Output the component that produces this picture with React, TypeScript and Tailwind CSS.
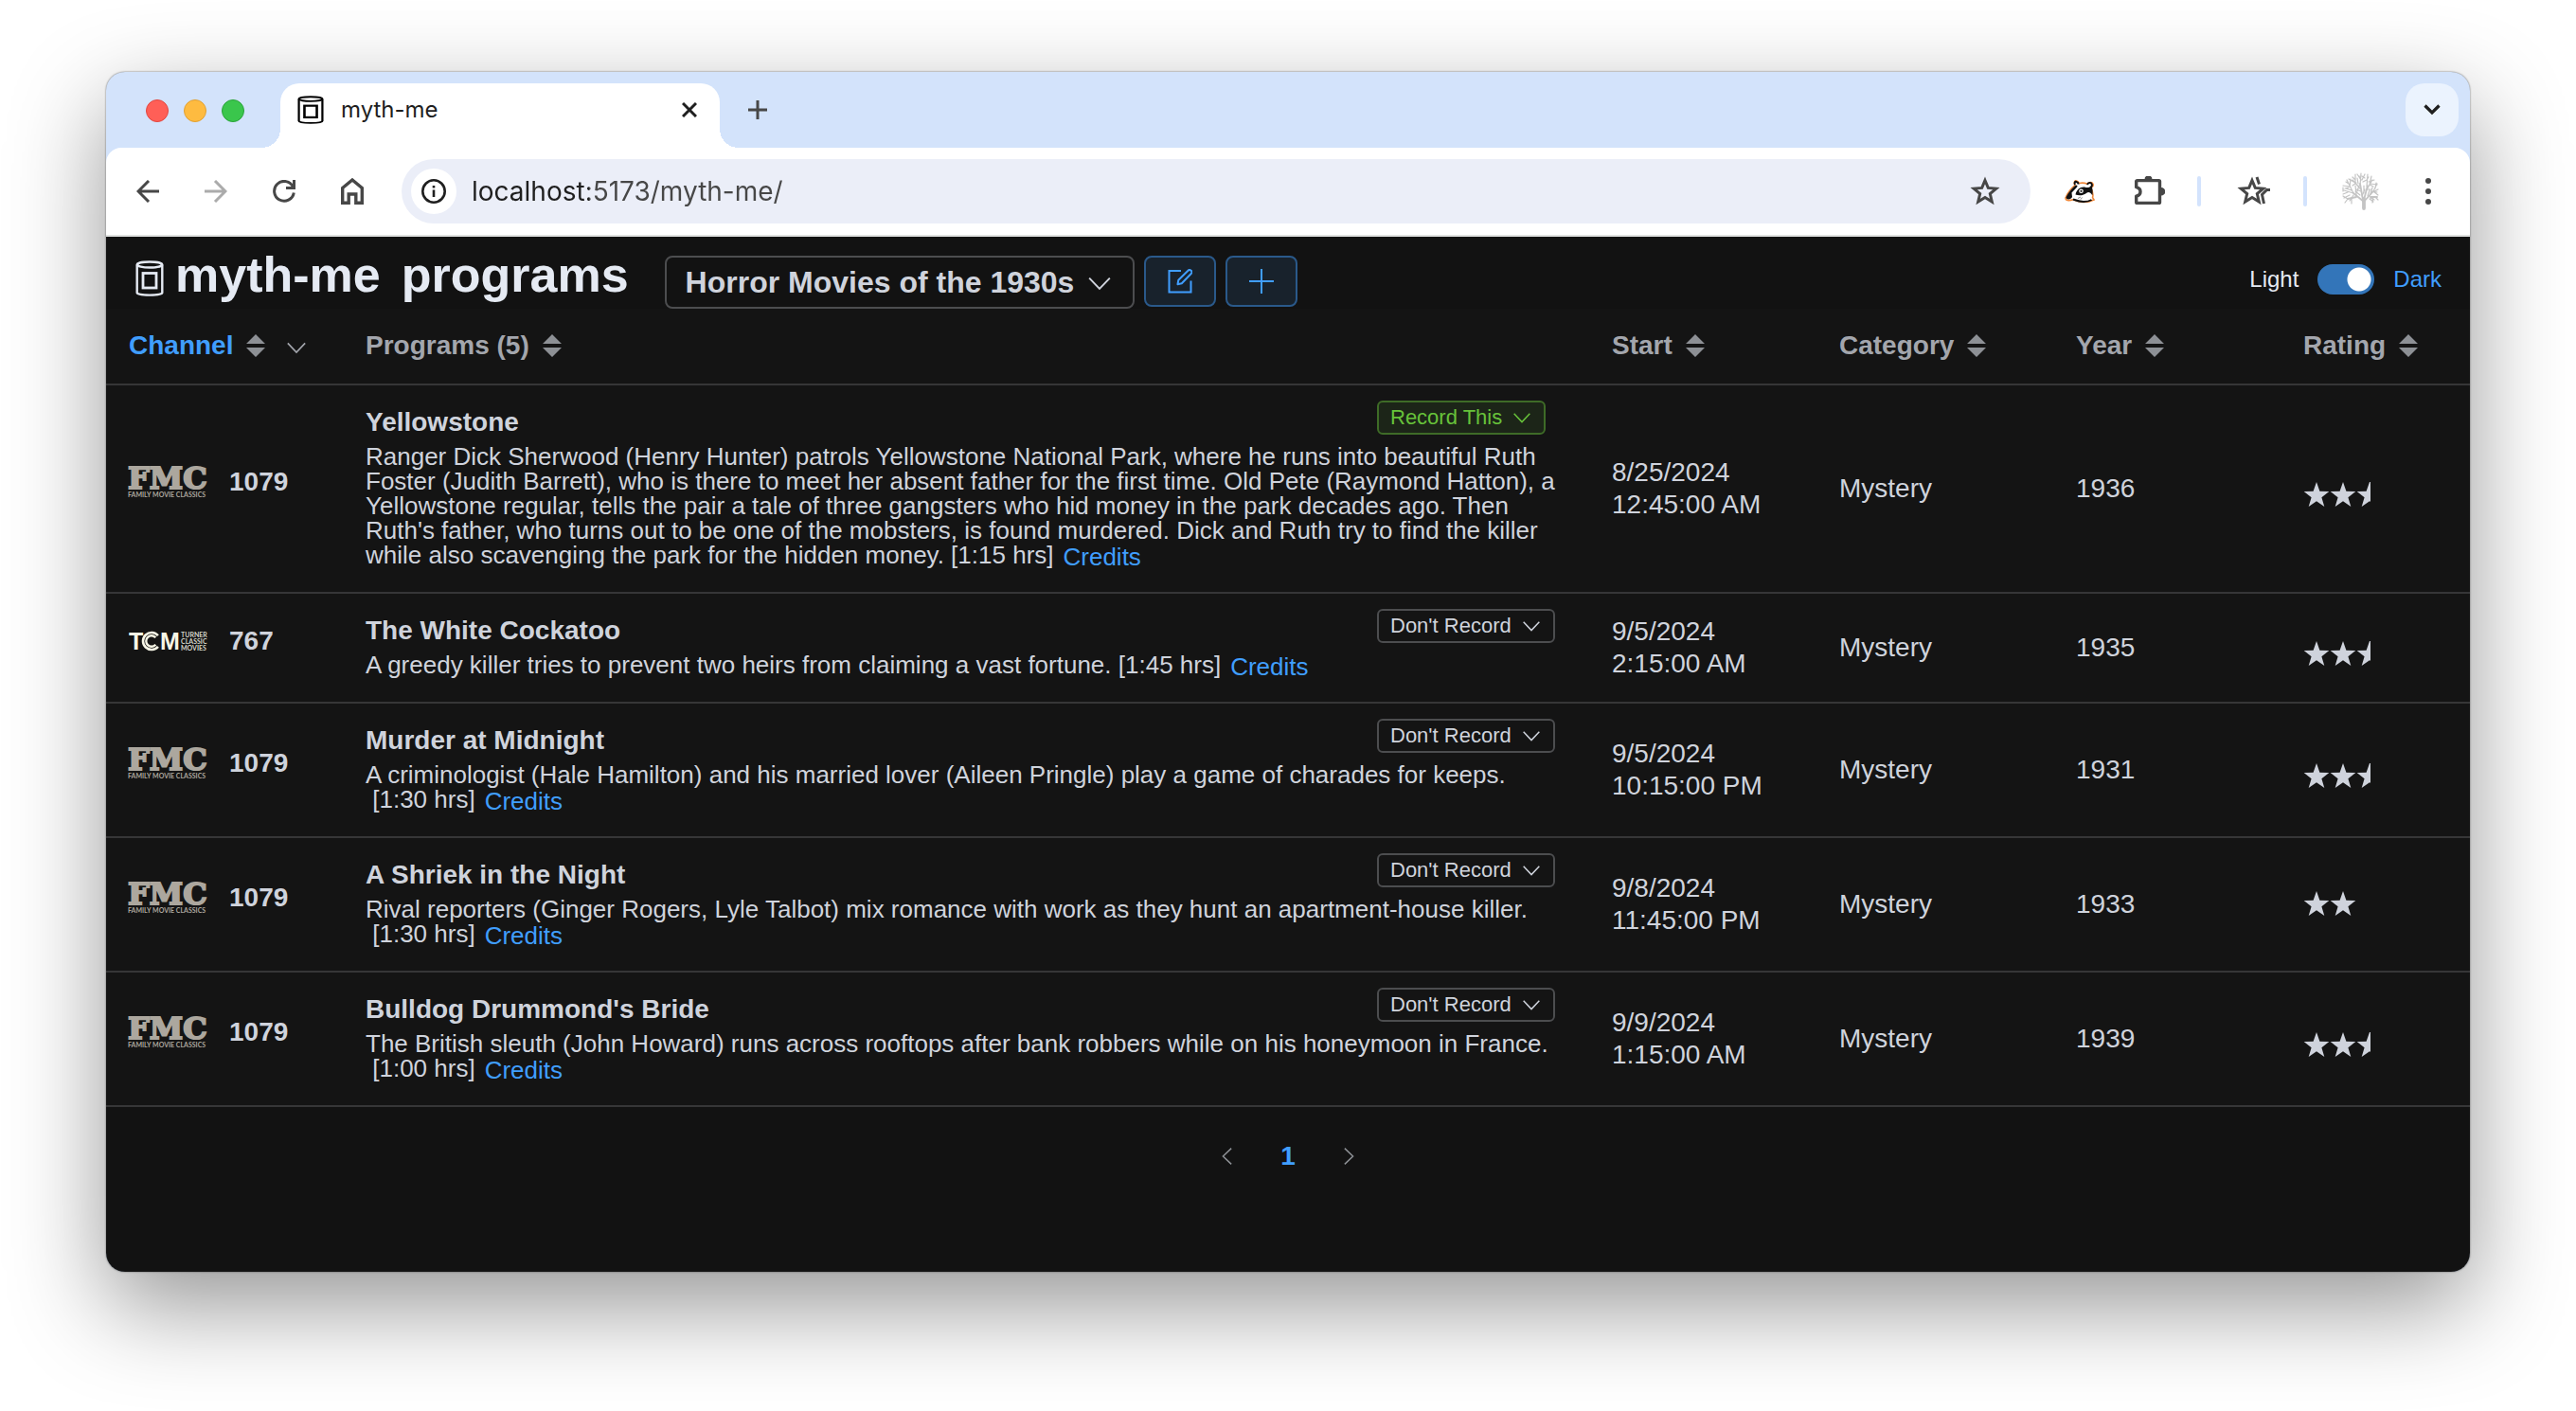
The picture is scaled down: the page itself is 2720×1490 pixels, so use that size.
import React from "react";

type Program = {
  logo: "fmc" | "tcm";
  channel: string;
  title: string;
  description: string;
  duration: string;
  date: string;
  time: string;
  year: string;
  stars: number;
  record: boolean;
};

const programs: Program[] = [
  {
    logo: "fmc",
    channel: "1079",
    title: "Yellowstone",
    description:
      "Ranger Dick Sherwood (Henry Hunter) patrols Yellowstone National Park, where he runs into beautiful Ruth Foster (Judith Barrett), who is there to meet her absent father for the first time. Old Pete (Raymond Hatton), a Yellowstone regular, tells the pair a tale of three gangsters who hid money in the park decades ago. Then Ruth's father, who turns out to be one of the mobsters, is found murdered. Dick and Ruth try to find the killer while also scavenging the park for the hidden money.",
    duration: "1:15",
    date: "8/25/2024",
    time: "12:45:00 AM",
    year: "1936",
    stars: 2.5,
    record: true,
  },
  {
    logo: "tcm",
    channel: "767",
    title: "The White Cockatoo",
    description: "A greedy killer tries to prevent two heirs from claiming a vast fortune.",
    duration: "1:45",
    date: "9/5/2024",
    time: "2:15:00 AM",
    year: "1935",
    stars: 2.5,
    record: false,
  },
  {
    logo: "fmc",
    channel: "1079",
    title: "Murder at Midnight",
    description:
      "A criminologist (Hale Hamilton) and his married lover (Aileen Pringle) play a game of charades for keeps.",
    duration: "1:30",
    date: "9/5/2024",
    time: "10:15:00 PM",
    year: "1931",
    stars: 2.5,
    record: false,
  },
  {
    logo: "fmc",
    channel: "1079",
    title: "A Shriek in the Night",
    description:
      "Rival reporters (Ginger Rogers, Lyle Talbot) mix romance with work as they hunt an apartment-house killer.",
    duration: "1:30",
    date: "9/8/2024",
    time: "11:45:00 PM",
    year: "1933",
    stars: 2,
    record: false,
  },
  {
    logo: "fmc",
    channel: "1079",
    title: "Bulldog Drummond's Bride",
    description:
      "The British sleuth (John Howard) runs across rooftops after bank robbers while on his honeymoon in France.",
    duration: "1:00",
    date: "9/9/2024",
    time: "1:15:00 AM",
    year: "1939",
    stars: 2.5,
    record: false,
  },
];

function CanIcon({ className }: { className: string }) {
  return (
    <svg
      viewBox="0 0 30 38"
      preserveAspectRatio="none"
      className={className}
      fill="none"
      stroke="currentColor"
      aria-hidden="true"
    >
      <ellipse cx="15" cy="4.5" rx="13.2" ry="3" strokeWidth="2.4" />
      <path d="M1.700 4.500V34c0 1.600 5 2.600 13.300 2.600S28.300 35.600 28.300 34V4.500" strokeWidth="2.400" />
      <rect x="8" y="13.500" width="14" height="15.500" strokeWidth="2.800" />
    </svg>
  );
}

function ChevronDown({ className }: { className: string }) {
  return (
    <svg viewBox="0 0 24 24" className={className} fill="none" stroke="currentColor" strokeWidth="1.800" aria-hidden="true">
      <path d="M2 7l10 10.500L22 7" />
    </svg>
  );
}

function Toolbar() {
  const button = "flex size-12 items-center justify-center text-[#474747]";
  return (
    <div className="flex h-[92px] items-center rounded-t-[16px] bg-white pr-5 pl-5">
      <div className="flex gap-6">
        <button className={button} aria-label="Back">
          <svg viewBox="0 0 24 24" className="size-6" fill="none" stroke="currentColor" strokeWidth="3">
            <path d="M24 12H2.500M13 1L2 12l11 11" />
          </svg>
        </button>
        <button className="flex size-12 items-center justify-center text-[#ababab]" aria-label="Forward">
          <svg viewBox="0 0 24 24" className="size-6" fill="none" stroke="currentColor" strokeWidth="3">
            <path d="M0 12h21.500M11 1l11 11-11 11" />
          </svg>
        </button>
        <button className={button} aria-label="Reload">
          <svg viewBox="0 0 24 24" className="size-6" fill="none" stroke="currentColor" strokeWidth="3">
            <path d="M22.300 13.500A10.400 10.400 0 1 1 21.500 7.500" />
            <path d="M22.500 0v8.500H14" />
          </svg>
        </button>
        <button className={button} aria-label="Home">
          <svg viewBox="0 0 24 28" className="h-7 w-6" fill="none" stroke="currentColor" strokeWidth="3.400">
            <path d="M1.700 26.300V10.500L12 2l10.300 8.500v15.800h-6.500V17H8.200v9.300z" />
          </svg>
        </button>
      </div>
      <div className="ml-7 flex h-[68px] flex-1 items-center rounded-full bg-[#ebeef8] pr-6 pl-[10px]">
        <button className="flex size-12 items-center justify-center rounded-full bg-white text-[#1f1f1f]" aria-label="Site information">
          <svg viewBox="0 0 26 26" className="size-[26px]" fill="none" stroke="currentColor">
            <circle cx="13" cy="13" r="11.700" strokeWidth="2.600" />
            <path d="M13 11.500V19M13 7v2.500" strokeWidth="2.600" />
          </svg>
        </button>
        <input
          type="text"
          aria-label="Address"
          defaultValue="localhost:5173/myth-me/"
          className="ml-4 h-12 flex-1 bg-[linear-gradient(90deg,#1f1f1f_124px,#474747_124px)] bg-clip-text font-['Inter',sans-serif] text-[28px] text-transparent outline-none"
        />
        <button className={button} aria-label="Bookmark this tab">
          <svg viewBox="0 0 32 32" className="size-8" fill="none" stroke="currentColor" strokeWidth="3">
            <path d="M16 4.500l3.300 7.900 8.500.7-6.500 5.500 2 8.400-7.300-4.500-7.300 4.500 2-8.400-6.500-5.500 8.500-.7z" />
          </svg>
        </button>
      </div>
      <button className="ml-7 flex size-12 items-center justify-center" aria-label="Privacy Badger">
        <svg viewBox="0 0 32 26" className="h-[26px] w-8">
          <path
            d="M1 20C3 15 8 9 11 6.500 9.500 3.500 10.500 1.500 12.500 2s2.500 1.500 3 2.500c3-.7 6-.3 8.500.7 1.500-2.200 5-2.500 6 0 .8 2-.8 3.600-2.300 4C30 14 30.500 17 29.500 19.500L31 22c-3 1.500-7 2.500-11 2.500S12 23 9 21.800C6 22.800 1 23.500 1 20z"
            fill="#fff"
            stroke="#f0883a"
            strokeWidth="1.600"
          />
          <path
            d="M1.500 19.500C4 14 8.500 9 12 6.500c2 .2 2 1.500.5 2.800L7.500 14.500 8 19c-1 2.700-6 3.500-6.500.5zM11.500 16.500C13 10.500 17.500 7.500 22.500 9c2.500.5 5-.8 5.800-2.300 1.400 3.500 1.700 7 1 10.500-2-3-4-4-6-2.500-2.600 2.200-7.200 3.500-11.800 1.800z"
            fill="#111"
          />
          <path
            d="M11 6C10 4 11 2.500 12.500 3s2 2 2 2.500M24 6c1-2.500 4-2.500 4.800-.5.6 1.800-.6 3-1.800 3.200M9 21.500C13 23 17 24 20 24s6-.5 8.500-2"
            fill="none"
            stroke="#111"
            strokeWidth="2"
          />
          <circle cx="17.500" cy="12.800" r="2.300" fill="#fff" />
          <circle cx="17.500" cy="12.800" r="1.100" fill="#111" />
          <path d="M14 20.500l3-1.500M17 21.500l1.500-2" stroke="#888" strokeWidth="1" />
        </svg>
      </button>
      <button className="ml-[26px] flex size-12 items-center justify-center text-[#474747]" aria-label="Extensions">
        <svg viewBox="0 0 32 32" className="size-8">
          <path
            d="M3.600 4.600H25.500a1 1 0 0 1 1 1V27.400a1 1 0 0 1-1 1H2.700a1 1 0 0 1-1-1V21.200c2.600-.6 4.300-2.300 4.300-4.700S4.300 12.300 1.700 11.700V5.600a1 1 0 0 1 1-1z"
            fill="none"
            stroke="currentColor"
            strokeWidth="3.400"
            strokeLinejoin="round"
          />
          <path d="M10.500 3.500a4 4 0 0 1 8 0zM28 12a4.300 4.300 0 0 1 0 8.600z" fill="currentColor" />
        </svg>
      </button>
      <span className="ml-[26px] h-8 w-1 rounded-full bg-[#d3e3fd]" />
      <button className="ml-8 flex size-12 items-center justify-center text-[#474747]" aria-label="Labs">
        <svg viewBox="0 0 36 32" className="h-8 w-9">
          <path
            d="M16 4.500l3.300 7.900 8.500.7-6.500 5.500 2 8.400-7.300-4.500-7.300 4.500 2-8.400-6.500-5.500 8.500-.7z"
            fill="none"
            stroke="currentColor"
            strokeWidth="3"
          />
          <path d="M21 1l2.500 7.500M35 14.500h-3.500L26.500 19.500l2 9.500" fill="none" stroke="currentColor" strokeWidth="3" />
        </svg>
      </button>
      <span className="ml-7 h-8 w-1 rounded-full bg-[#d3e3fd]" />
      <button className="ml-8 flex size-12 items-center justify-center" aria-label="Profile">
        <svg viewBox="0 0 40 40" className="size-10" fill="none" stroke="#c4c4c4" strokeLinecap="round">
          <path d="M24 38V28" strokeWidth="3.800" />
          <path d="M24 31L13 22M24 31l9-10M23 29l-3-17M24 29l4-15M16 26l-9 2M31 26l7 0" strokeWidth="1.800" />
          <path
            d="M13 22L3 19M13 22L8 12M20 17L12 8M20 14L21 1M26 20L33 8M27 15L28 2M33 21l6-3M16 24L15 14M9 15L2 14M9 15l1-8M15 11l0-9M15 11l-7-4M21 8l-4-6M22 8l3-6M30 13l2-9M31 12l7 1M34 20l4-8M34 20l5 4M7 28l-5-3M7 28l-3 4M11 27l0 6M7 21l-5 2M36 26l3 3M34 26l-1 6M21 20l-5-2M27 18l4 0M20 24l-5-4M28 25l2-6M24 22l0-8M11 19l-6-2M23 10l4-2M29 10l6-2M12 14l4-3M18 12l-1-6M34 15l-4-2M36 17l1-6M13 24l-4 6M30 28l4 3M5 10l3 2M17 20l2-6M22 25l3-7M4 17l4-1M31 23l2-7M25 6l-3-2M12 5l3 3M2 20l0-4M6 8l2 4M38 21l-5-1M19 4l2 4M29 5l-2 3M9 24l-6 3M35 29l-4-2"
            strokeWidth="1.200"
          />
        </svg>
      </button>
      <button className="ml-6 flex size-12 items-center justify-center text-[#474747]" aria-label="Menu">
        <svg viewBox="0 0 8 28" className="h-7 w-2" fill="currentColor">
          <circle cx="4" cy="3" r="3" />
          <circle cx="4" cy="14" r="3" />
          <circle cx="4" cy="25" r="3" />
        </svg>
      </button>
    </div>
  );
}

function TabStrip() {
  return (
    <div className="flex h-20 pt-3 pr-3 pl-[42px]">
      <div className="flex h-[58px] w-[142px] items-center gap-4">
        <span className="size-6 rounded-full border border-[#e2463f] bg-[#ff5f57]" />
        <span className="size-6 rounded-full border border-[#e1a032] bg-[#febb40]" />
        <span className="size-6 rounded-full border border-[#2ba33a] bg-[#3ac64c]" />
      </div>
      <div className="relative flex w-[464px] items-center rounded-t-[20px] bg-white pr-5 pb-3 pl-[18px]">
        <span className="absolute bottom-0 -left-5 size-5 bg-[radial-gradient(circle_at_top_left,transparent_20px,white_20px)]" />
        <span className="absolute -right-5 bottom-0 size-5 bg-[radial-gradient(circle_at_top_right,transparent_20px,white_20px)]" />
        <CanIcon className="h-[30px] w-7 text-black" />
        <span className="ml-[18px] flex-1 font-['Inter',sans-serif] text-[24px] leading-8 text-[#1f1f1f]">myth-me</span>
        <button className="flex size-6 items-center justify-center text-[#1f1f1f]" aria-label="Close tab">
          <svg viewBox="0 0 16 16" className="size-4" fill="none" stroke="currentColor" strokeWidth="3">
            <path d="M1 1l14 14M15 1L1 15" />
          </svg>
        </button>
      </div>
      <button className="ml-6 flex h-14 w-8 items-center justify-center text-[#474747]" aria-label="New tab">
        <svg viewBox="0 0 20 20" className="size-5" fill="none" stroke="currentColor" strokeWidth="3">
          <path d="M10 0v20M0 10h20" />
        </svg>
      </button>
      <button
        className="ml-auto flex size-14 items-center justify-center rounded-[20px] bg-[#ebf3fe] text-[#1f1f1f]"
        aria-label="Search tabs"
      >
        <svg viewBox="0 0 18 12" className="h-3 w-[18px]" fill="none" stroke="currentColor" strokeWidth="3.200">
          <path d="M1.500 1.500L9 9l7.500-7.500" />
        </svg>
      </button>
    </div>
  );
}

function SortCaret() {
  return (
    <svg viewBox="0 0 20 24" className="h-6 w-5 text-[#8d9095]" fill="currentColor" aria-hidden="true">
      <path d="M10 0l10 10H0zM10 24L0 14h20z" />
    </svg>
  );
}

function FmcLogo() {
  return (
    <svg viewBox="0 0 88 34" className="h-[34px] w-[88px] overflow-visible" role="img" aria-label="FMC Family Movie Classics">
      <text
        x="1"
        y="24"
        fontFamily="'DejaVu Serif', serif"
        fontWeight="bold"
        fontSize="32"
        fill="#aca79e"
        stroke="#aca79e"
        strokeWidth="2"
      >
        FMC
      </text>
      <text x="1" y="33" fontFamily="Lato, sans-serif" fontWeight="bold" fontSize="7" fill="#aca79e">
        FAMILY MOVIE CLASSICS
      </text>
    </svg>
  );
}

function TcmLogo() {
  return (
    <svg viewBox="0 0 88 24" className="h-6 w-[88px] overflow-visible" role="img" aria-label="TCM Turner Classic Movies">
      <g fontFamily="'Liberation Sans', sans-serif" fontWeight="bold" fontSize="25" fill="#f7f6e6">
        <text x="2" y="21">T</text>
        <text x="35" y="21">M</text>
      </g>
      <path d="M32.900 6.200A9 9 0 1 0 32.900 17.800" fill="none" stroke="#f7f6e6" strokeWidth="2.600" />
      <path d="M30.300 8.300A5.700 5.700 0 1 0 30.300 15.700" fill="none" stroke="#f7f6e6" strokeWidth="2.400" />
      <g fontFamily="Lato, sans-serif" fontSize="7" fill="#d5d5c9">
        <text x="57" y="8">TURNER</text>
        <text x="57" y="15">CLASSIC</text>
        <text x="57" y="22">MOVIES</text>
      </g>
    </svg>
  );
}

function Rating({ stars }: { stars: number }) {
  const half = stars % 1 !== 0;
  const whole = Math.floor(stars);
  return (
    <div className={half ? "flex pt-3" : "flex pb-0.5"} role="img" aria-label={stars + " stars"}>
      {Array.from({ length: whole }, (_, i) => (
        <svg key={i} viewBox="0 0 28 26" className="h-[26px] w-7" fill="currentColor">
          <path d="M14 0l3.400 9.700L27.300 10 19.400 16.200 22.300 26 14 20.200 5.700 26 8.600 16.200.7 10l9.900-.3z" />
        </svg>
      ))}
      {half && (
        <svg viewBox="0 0 15 26" className="h-[26px] w-[15px]" fill="currentColor">
          <path d="M14 0H15V20.800L14 20.200 5.700 26 8.600 16.200.7 10l9.900-.3z" />
        </svg>
      )}
    </div>
  );
}

const columns = ["Channel", "Programs (5)", "Start", "Category", "Year", "Rating"];

function ProgramTable() {
  return (
    <table className="w-full table-fixed border-collapse bg-[#141414] text-left text-[28px] leading-[34px] text-[#cfd3dc]">
      <colgroup>
        <col className="w-[250px]" />
        <col />
        <col className="w-[240px]" />
        <col className="w-[250px]" />
        <col className="w-[240px]" />
        <col className="w-[200px]" />
      </colgroup>
      <thead>
        <tr className="h-20 border-b-2 border-[#363637] text-[#a3a6ad]">
          {columns.map((name, i) => (
            <th key={name} scope="col" className="px-6 pt-0 pb-0.5 align-middle font-bold">
              <button className="flex items-center gap-[14px]">
                <span className={i === 0 ? "text-[#409eff]" : ""}>{name}</span>
                <SortCaret />
                {i === 0 && <ChevronDown className="mt-1 ml-2 size-[22px]" />}
              </button>
            </th>
          ))}
        </tr>
      </thead>
      <tbody>
        {programs.map((p) => (
          <tr key={p.title} className="border-b-2 border-[#363637]">
            <td className="pr-6 pb-[14px] pl-[22px]">
              <div className="flex items-center gap-5 font-bold">
                {p.logo === "fmc" ? <FmcLogo /> : <TcmLogo />}
                <span>{p.channel}</span>
              </div>
            </td>
            <td className="px-6 pt-4 pb-6">
              <div className="flex h-[46px]">
                <h2 className="flex-1 leading-[46px] font-bold">{p.title}</h2>
                <div className="w-[200px]">
                  <div className="relative inline-block align-top">
                    <select
                      aria-label={"Recording rule for " + p.title}
                      defaultValue={p.record ? "Record This" : "Don't Record"}
                      className={
                        p.record
                          ? "block h-9 w-[178px] appearance-none rounded-[6px] border-2 border-[#3e6b27] bg-[#1c2518] pl-3 text-[22px] leading-8 text-[#67c23a]"
                          : "block h-9 w-[188px] appearance-none rounded-[6px] border-2 border-[#4c4d4f] bg-transparent pl-3 text-[22px] leading-8 text-[#cfd3dc]"
                      }
                    >
                      <option>Record This</option>
                      <option>Don't Record</option>
                    </select>
                    <ChevronDown
                      className={
                        p.record
                          ? "pointer-events-none absolute top-2 right-[15px] size-5 text-[#67c23a]"
                          : "pointer-events-none absolute top-2 right-[15px] size-5"
                      }
                    />
                  </div>
                </div>
              </div>
              <p className="text-[26px] leading-[26px]">
                {p.description}
                <wbr />
                {`\u00a0[${p.duration}\u00a0hrs]`}
                <a href="#credits" className="ml-[10px] inline-block align-[-2px] text-[#409eff]">
                  Credits
                </a>
              </p>
            </td>
            <td className="px-6">
              {p.date}
              <br />
              {p.time}
            </td>
            <td className="px-6">Mystery</td>
            <td className="px-6">{p.year}</td>
            <td className="px-6">
              <Rating stars={p.stars} />
            </td>
          </tr>
        ))}
      </tbody>
    </table>
  );
}

export default function App() {
  const action =
    "flex h-[54px] w-[76px] items-center justify-center rounded-[8px] border-2 border-[#2a598a] bg-[#18222c] text-[#409eff]";
  return (
    <div className="bg-white px-28 pt-[76px] pb-[148px] font-['Liberation_Sans',Arial,sans-serif]">
      <div className="overflow-hidden rounded-[20px] bg-[#d3e3fb] shadow-[0_0_2px_rgba(0,0,0,0.6),0_36px_100px_rgba(0,0,0,0.42)]">
        <TabStrip />
        <Toolbar />
        <main className="border-t-2 border-[#e1e3e1] bg-[#121212]">
          <header className="flex h-[76px] items-start pt-5 pr-[30px] pl-[31px] text-[#e5eaf3]">
            <CanIcon className="mt-[5px] h-[38px] w-[30px]" />
            <h1 className="-mt-[10px] ml-3 flex gap-[22px] text-[52px] leading-[60px] font-bold">
              <span>myth-me</span>
              <span>programs</span>
            </h1>
            <div className="relative ml-[38px]">
              <select
                aria-label="Saved search"
                className="block h-14 w-[496px] appearance-none rounded-[8px] border-2 border-[#4c4d4f] bg-transparent pl-5 text-[32px] font-bold text-[#cfd3dc]"
              >
                <option>Horror Movies of the 1930s</option>
              </select>
              <ChevronDown className="pointer-events-none absolute top-4 right-6 size-[26px] text-[#cfd3dc]" />
            </div>
            <button className={action + " ml-[10px]"} aria-label="Edit search">
              <svg viewBox="0 0 26 26" className="size-[26px]" fill="none" stroke="currentColor" strokeWidth="2">
                <path d="M14 2H1.500v22.500H24.500V12.500" />
                <path d="M10.500 16.200l.8-4.500L21.500 1.800a2.200 2.200 0 0 1 3.200 3.200L14.800 15.300z" strokeLinejoin="round" />
              </svg>
            </button>
            <button className={action + " ml-[10px]"} aria-label="Add search">
              <svg viewBox="0 0 26 26" className="size-[26px]" fill="none" stroke="currentColor" strokeWidth="2">
                <path d="M13 0v26M0 13h26" />
              </svg>
            </button>
            <label className="mt-[9px] ml-auto flex items-center text-[24px] leading-8">
              <span>Light</span>
              <input
                type="checkbox"
                role="switch"
                defaultChecked
                aria-label="Dark mode"
                className="mx-5 h-8 w-[60px] appearance-none rounded-full bg-[#3375b9] bg-[radial-gradient(circle_at_44px_16px,white_12px,transparent_13px)]"
              />
              <span className="text-[#409eff]">Dark</span>
            </label>
          </header>
          <ProgramTable />
          <nav className="flex items-center justify-center gap-[46px] pt-9 pb-[106px] text-[28px] leading-8 font-bold" aria-label="Pages">
            <button className="text-[#8d9095]" aria-label="Previous page">
              <ChevronDown className="size-5 rotate-90" />
            </button>
            <button className="text-[#409eff]">1</button>
            <button className="text-[#8d9095]" aria-label="Next page">
              <ChevronDown className="size-5 -rotate-90" />
            </button>
          </nav>
        </main>
      </div>
    </div>
  );
}
